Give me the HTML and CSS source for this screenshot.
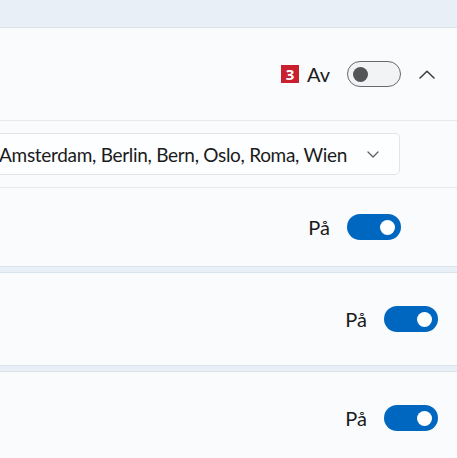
FILE: index.html
```html
<!DOCTYPE html>
<html>
<head>
<meta charset="utf-8">
<link rel="stylesheet" href="styles.css">
</head>
<body>
<div class="page">
  <div class="top"></div>
  <section class="card expander">
    <div class="row header">
      <span class="badge">3</span>
      <span class="state">Av</span>
      <span class="toggle off"><span class="knob"></span></span>
      <svg class="chev-up" width="16" height="9" viewBox="0 0 16 9"><path d="M1 8 L8 1.2 L15 8" fill="none" stroke="#3a3a3a" stroke-width="1.5" stroke-linecap="round" stroke-linejoin="round"/></svg>
    </div>
    <div class="row sub dropdown-row">
      <div class="dropdown">
        <span class="dd-text">Amsterdam, Berlin, Bern, Oslo, Roma, Wien</span>
        <svg class="chev-down" width="12" height="7" viewBox="0 0 12 7"><path d="M1 1 L6 6 L11 1" fill="none" stroke="#606060" stroke-width="1.3" stroke-linecap="round" stroke-linejoin="round"/></svg>
      </div>
    </div>
    <div class="row sub toggle-row">
      <span class="state">På</span>
      <span class="toggle on"><span class="knob"></span></span>
    </div>
  </section>
  <section class="card single">
    <div class="row">
      <span class="state">På</span>
      <span class="toggle on"><span class="knob"></span></span>
    </div>
  </section>
  <section class="card single">
    <div class="row">
      <span class="state">På</span>
      <span class="toggle on"><span class="knob"></span></span>
    </div>
  </section>
</div>
</body>
</html>
```

FILE: styles.css
```css
html, body {
  margin: 0;
  padding: 0;
  background: #e8eff6;
  overflow: hidden;
}
.page {
  width: 457px;
  height: 458px;
  overflow: hidden;
  display: flex;
  flex-direction: column;
  gap: 5px;
  font-family: "Lato", "Open Sans", sans-serif;
  color: #1b1b1b;
}
.top {
  height: 22px;
  flex: none;
}
.card {
  background: #f9fbfd;
  border-top: 1px solid #dae3e9;
  border-bottom: 1px solid #dae3e9;
  flex: none;
}
.row {
  display: flex;
  align-items: center;
  justify-content: flex-end;
}
.header {
  height: 92px;
  padding-right: 22px;
  border-bottom: 1px solid #e6eaee;
}
.sub {
  padding-right: 56px;
}
.dropdown-row {
  height: 66px;
  border-bottom: 1px solid #e6eaee;
}
.toggle-row {
  height: 78px;
}
.single .row {
  height: 92px;
  padding-right: 19px;
}
.badge {
  width: 18px;
  height: 18px;
  background: #c8202e;
  color: #fff;
  font-family: "Open Sans", sans-serif;
  font-weight: 700;
  font-size: 15px;
  line-height: 18px;
  text-align: center;
  margin-right: 8px;
}
.state {
  font-size: 20px;
  margin-right: 17px;
  line-height: 26px;
}
.toggle {
  box-sizing: border-box;
  width: 54px;
  height: 26px;
  border-radius: 13px;
  display: flex;
  align-items: center;
}
.toggle.off {
  border: 1.5px solid #666a6e;
  background: #f1f3f5;
  padding-left: 5px;
}
.toggle.off .knob {
  width: 15px;
  height: 15px;
  border-radius: 50%;
  background: #535557;
}
.toggle.on {
  background: #0067c0;
  justify-content: flex-end;
  padding-right: 6px;
}
.toggle.on .knob {
  width: 15px;
  height: 15px;
  border-radius: 50%;
  background: #fff;
}
.chev-up {
  margin-left: 18px;
}
.dropdown {
  flex: none;
  display: flex;
  align-items: center;
  height: 42px;
  box-sizing: border-box;
  background: #fdfeff;
  border: 1px solid #e1e5ea;
  border-radius: 5px;
  padding-left: 12px;
  padding-right: 20px;
  margin-right: 1px;
}
.dd-text {
  font-size: 19px;
  letter-spacing: -0.3px;
  white-space: nowrap;
}
.chev-down {
  margin-left: 20px;
}
```
